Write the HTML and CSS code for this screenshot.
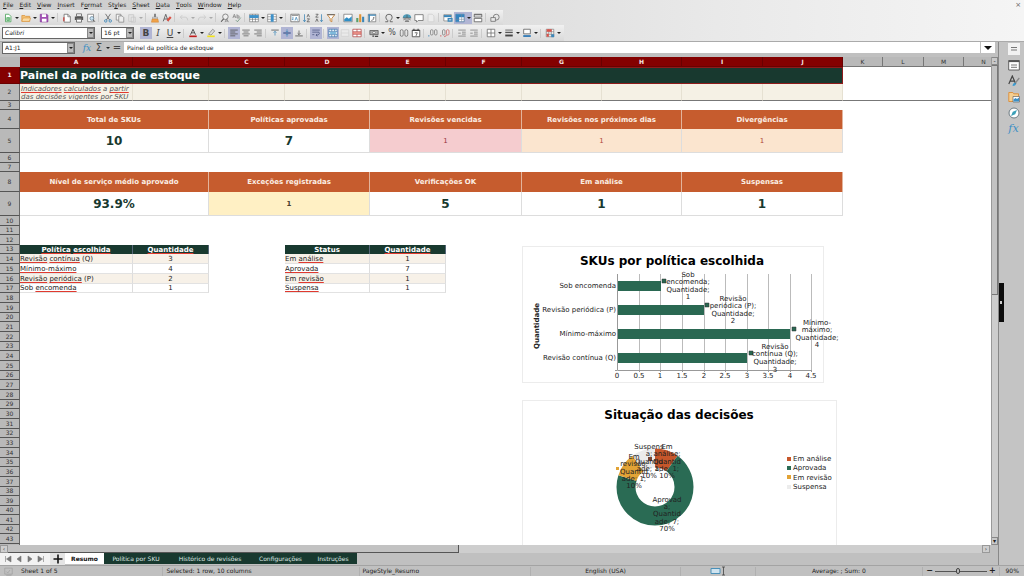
FILE: index.html
```
<!DOCTYPE html>
<html lang="pt">
<head>
<meta charset="utf-8">
<title>Painel da política de estoque</title>
<link rel="stylesheet" href="styles.css">
</head>
<body>
<svg class="defs" aria-hidden="true">
  <symbol id="new" viewBox="0 0 12 12"><path d="M3 1.500h4l2.500 2.500v6.500h-6.500z" fill="#fff" stroke="#4da45c"/><path d="M4.500 5.500h3.500v3.500h-3.500zM4.500 7.200h3.500M6.200 5.500v3.500" fill="none" stroke="#36a04a" stroke-width=".8"/></symbol>
  <symbol id="open" viewBox="0 0 12 12"><path d="M1 3h3.500l1 1h5v6h-9.500z" fill="#f3c276" stroke="#d88c31" stroke-width=".8"/><path d="M2.500 6h9l-1.500 4h-9z" fill="#fbdca4" stroke="#d88c31" stroke-width=".6"/></symbol>
  <symbol id="save" viewBox="0 0 12 12"><path d="M1.500 1.500h8l1.200 1.200v8h-9.200z" fill="#a34fb5" stroke="#84369a" stroke-width=".8"/><path d="M3.500 1.500h5v3.200h-5zM3.500 7h5.500v3.500h-5.500z" fill="#fff"/></symbol>
  <symbol id="pdf" viewBox="0 0 12 12"><path d="M2.500 1.500h4.500l3 3v6.500h-7.500z" fill="#fff" stroke="#666" stroke-width=".9"/><path d="M7 1.500v3h3" fill="none" stroke="#666" stroke-width=".8"/><path d="M2.200 5v5" stroke="#cf3b36" stroke-width="1.400"/></symbol>
  <symbol id="print" viewBox="0 0 12 12"><path d="M3 1h6v3h-6zM3 7.500h6v3.500h-6z" fill="#fff" stroke="#444" stroke-width=".8"/><path d="M1 4.200h10v4.300h-2v-1.500h-6v1.500h-2z" fill="#555"/></symbol>
  <symbol id="preview" viewBox="0 0 12 12"><path d="M2 1.500h7v9h-7z" fill="#fff" stroke="#666" stroke-width=".8"/><circle cx="7" cy="6.500" r="2.300" fill="#c8e2f2" stroke="#5e798c" stroke-width=".8"/><path d="M8.700 8.200l2 2.300" stroke="#444"/></symbol>
  <symbol id="cut" viewBox="0 0 12 12"><path d="M3 1l5 7.500M9 1l-5 7.500" stroke="#555" stroke-width=".9"/><circle cx="3.300" cy="9.500" r="1.500" fill="none" stroke="#3b86b8"/><circle cx="8.700" cy="9.500" r="1.500" fill="none" stroke="#3b86b8"/></symbol>
  <symbol id="copy" viewBox="0 0 12 12"><path d="M1.500 1.500h5.500v7h-5.500z" fill="#f5f5f5" stroke="#777" stroke-width=".8"/><path d="M4.500 3.500h4l2 2v5.500h-6z" fill="#eee" stroke="#777" stroke-width=".8"/></symbol>
  <symbol id="paste" viewBox="0 0 12 12"><path d="M2 2h6v8h-6zM5 5h5v6h-5z" fill="#e4e4e4" stroke="#c2c2c2" stroke-width=".8"/></symbol>
  <symbol id="brush" viewBox="0 0 12 12"><path d="M5.200 1h1.600v4h-1.600z" fill="#555"/><path d="M3 5h6v2h-6z" fill="#ddd" stroke="#777" stroke-width=".5"/><path d="M2.500 7.200h7l.8 3.800h-8.600z" fill="#efa24b" stroke="#d07a22" stroke-width=".5"/></symbol>
  <symbol id="clear" viewBox="0 0 12 12"><path d="M1.500 10l3-8.500 3 8.500M2.700 7.200h3.800" fill="none" stroke="#555"/><path d="M5.500 8.500l4-4.500 2 1.700-4 4.500z" fill="#db4f42"/></symbol>
  <symbol id="undo" viewBox="0 0 12 12"><path d="M4 2.500l-2.500 2.500 2.500 2.500M2 5h5.500q3 0 3 4" fill="none" stroke="#c9c9c9"/></symbol>
  <symbol id="redo" viewBox="0 0 12 12"><path d="M8 2.500l2.500 2.500-2.500 2.500M10 5h-5.500q-3 0-3 4" fill="none" stroke="#c9c9c9"/></symbol>
  <symbol id="find" viewBox="0 0 12 12"><circle cx="6.500" cy="4.500" r="3.300" fill="#eee" stroke="#777"/><path d="M4.300 7l-3 3.500" stroke="#555" stroke-width="1.300"/><path d="M6 11l2-4 2.200 4M6.700 9.700h2.800" fill="none" stroke="#777" stroke-width=".8"/></symbol>
  <symbol id="spell" viewBox="0 0 12 12"><path d="M1 6l1.800-4.500 1.800 4.500M1.700 4.500h2.300M6 1.500v4.500M6 3.500h2.500v2.500h-2.500" fill="none" stroke="#777" stroke-width=".8"/><path d="M4.500 8.500l2 2 4-5" fill="none" stroke="#668d76" stroke-width=".9"/></symbol>
  <symbol id="row" viewBox="0 0 12 12"><path d="M.8 1.500h10.400v9h-10.400zM.8 7.500h10.400M4.200 1.500v9M7.700 1.500v9" fill="#fff" stroke="#666" stroke-width=".7"/><path d="M.5 2.500h11v3.500h-11z" fill="#3e91c9"/></symbol>
  <symbol id="col" viewBox="0 0 12 12"><path d="M.8 1.500h10.400v9h-10.400zM.8 4.500h10.400M.8 7.500h10.400" fill="#fff" stroke="#666" stroke-width=".7"/><path d="M4.500 1.500h3.500v9h-3.500z" fill="#3e91c9"/></symbol>
  <symbol id="sort" viewBox="0 0 12 12"><path d="M1 1.500h10v9h-10z" fill="#fff" stroke="#555" stroke-width=".8"/><path d="M2 3h8" stroke="#888"/><path d="M3.500 4.500v4l-1.200-1.200M6 9l1.500-4 1.500 4" fill="none" stroke="#3a83b5" stroke-width=".9"/></symbol>
  <symbol id="asc" viewBox="0 0 12 12"><path d="M3 1.500v9l-1.500-2M3 10.500l1.500-2" fill="none" stroke="#3a83b5" stroke-width=".9"/><path d="M6 5l1.500-3.500 1.500 3.500M6 7h3l-3 3.500h3.300" fill="none" stroke="#555" stroke-width=".9"/></symbol>
  <symbol id="desc" viewBox="0 0 12 12"><path d="M9 1.500v9l-1.500-2M9 10.500l1.500-2" fill="none" stroke="#3a83b5" stroke-width=".9"/><path d="M2 1.500h3l-3 3.500h3.300M2 10.500l1.500-3.500 1.500 3.500" fill="none" stroke="#555" stroke-width=".9"/></symbol>
  <symbol id="filter" viewBox="0 0 12 12"><path d="M1.500 2h9l-3.500 4.500v4l-2-1v-3z" fill="#fff" stroke="#c77c2a"/><path d="M1.500 2h9" stroke="#666" stroke-width="1.200"/></symbol>
  <symbol id="image" viewBox="0 0 12 12"><path d="M1 1.500h10v9h-10z" fill="#fff" stroke="#666" stroke-width=".8"/><path d="M1.500 10v-2.500l3-2.500 2.500 2 3.500-3v6z" fill="#2f8fc6"/></symbol>
  <symbol id="chart" viewBox="0 0 12 12"><path d="M1.500 6h2.500v5h-2.500z" fill="#5a9e6a"/><path d="M5 1.500h2.500v9.500h-2.500z" fill="#e09334"/><path d="M8.500 4.500h2.500v6.500h-2.500z" fill="#3b86b8"/></symbol>
  <symbol id="pivot" viewBox="0 0 12 12"><path d="M1.500 1.500h9v9h-9z" fill="#fff" stroke="#666" stroke-width=".8"/><path d="M1.500 2.500h9M2.700 1.500v9" stroke="#3b86b8" stroke-width="1.600"/><path d="M5 9q3.500 0 3.500-4l-1.500 1.300" fill="none" stroke="#555" stroke-width=".8"/></symbol>
  <symbol id="omega" viewBox="0 0 12 12"><path d="M1.500 10.500h3v-1.500q-2.300-1.500-2.300-4 0-3.500 3.800-3.500t3.800 3.500q0 2.500-2.300 4v1.500h3" fill="none" stroke="#555"/></symbol>
  <symbol id="link" viewBox="0 0 12 12"><path d="M1 6a5 4.500 0 0 1 10 0z" fill="#4f9dbb"/><path d="M2 8.700a1.500 1.500 0 0 1 1.500-1.500h2M10 8.700a1.500 1.500 0 0 0-1.500-1.500h-2M3.500 10.200h5M4 8.700h4M1 6h10M6 2v4" fill="none" stroke="#555" stroke-width=".8"/></symbol>
  <symbol id="comment" viewBox="0 0 12 12"><path d="M1 2h10v7h-6l-2 2v-2h-2z" fill="#fff" stroke="#666" stroke-width=".9"/></symbol>
  <symbol id="header" viewBox="0 0 12 12"><path d="M2.500 1.500h5l2 2v7h-7z" fill="#ececec" stroke="#ccc" stroke-width=".8"/></symbol>
  <symbol id="define" viewBox="0 0 12 12"><path d="M1 2h9v7.500h-9z" fill="#fff" stroke="#666" stroke-width=".7"/><path d="M1 2.500h9v2.500h-9z" fill="#3b86b8"/><path d="M5.500 6h6v4.500h-6z" fill="#3b86b8"/><path d="M7 8.200h3" stroke="#fff"/></symbol>
  <symbol id="freeze" viewBox="0 0 12 12"><path d="M1 1.500h10v9h-10z" fill="#fff" stroke="#3b6e99" stroke-width=".8"/><path d="M1 1.500h10v3.500h-6v5.500h-4z" fill="#3484bf"/><path d="M1 7.500h10M8 1.500v9" stroke="#789" stroke-width=".7"/></symbol>
  <symbol id="split" viewBox="0 0 12 12"><path d="M1.500 1.500h9v3.300h-9zM1.500 6.500h9v4h-9z" fill="#fff" stroke="#555" stroke-width=".9"/><path d="M1.500 2.200h9" stroke="#555"/></symbol>
  <symbol id="draw" viewBox="0 0 12 12"><circle cx="7.500" cy="5" r="3.500" fill="none" stroke="#666" stroke-width=".9"/><path d="M1 5.500h5.500v4.500h-5.500z" fill="#e9e9e9" stroke="#666" stroke-width=".9"/></symbol>
  <symbol id="fontcolor" viewBox="0 0 12 12"><path d="M3 8l3-6.500 3 6.500M4.200 5.800h3.600" fill="none" stroke="#555" stroke-width="1.200"/><path d="M1.500 9h9v2h-9z" fill="#c01c1c"/></symbol>
  <symbol id="hilite" viewBox="0 0 12 12"><path d="M3 7.500l5-6 2.500 2-4.500 5z" fill="#ddd" stroke="#777" stroke-width=".8"/><path d="M1.500 9h9v2h-9z" fill="#f2e21c"/></symbol>
  <symbol id="left" viewBox="0 0 12 12"><path d="M1.500 2.500h9M1.500 4.800h6M1.500 7.100h9M1.500 9.400h6" stroke="#555"/></symbol>
  <symbol id="center" viewBox="0 0 12 12"><path d="M1.500 2.500h9M3 4.800h6M1.500 7.100h9M3 9.400h6" stroke="#666"/></symbol>
  <symbol id="right" viewBox="0 0 12 12"><path d="M1.500 2.500h9M4.500 4.800h6M1.500 7.100h9M4.500 9.400h6" stroke="#666"/></symbol>
  <symbol id="vtop" viewBox="0 0 12 12"><path d="M1.500 2.500h9" stroke="#555"/><path d="M6 9v-5M4.300 5.700l1.700-1.700 1.700 1.700" fill="none" stroke="#3b86b8" stroke-width=".9"/></symbol>
  <symbol id="vmid" viewBox="0 0 12 12"><path d="M1.500 6h9" stroke="#334f88" stroke-width="1.300"/><path d="M6 1.500v3M6 7.500v3M4.500 3.500l1.500 1.500 1.500-1.500M4.500 8.500l1.500-1.500 1.500 1.500" fill="none" stroke="#3b86b8" stroke-width=".8"/></symbol>
  <symbol id="vbot" viewBox="0 0 12 12"><path d="M1.500 9.500h9" stroke="#555"/><path d="M6 3v5M4.300 6.300l1.700 1.700 1.700-1.700" fill="none" stroke="#555" stroke-width=".9"/></symbol>
  <symbol id="wrap" viewBox="0 0 12 12"><path d="M1.500 2.500h9M1.500 5h8q1.500 2-1 3.500h-2.500M1.500 8h2.500M7.500 7l-1.500 1.500 1.500 1.500" fill="none" stroke="#4a5480" stroke-width=".9"/></symbol>
  <symbol id="merge" viewBox="0 0 12 12"><path d="M1 1.500h10v9h-10zM1 4h10M1 8h10M4.500 1.500v2.500M8 1.500v2.500M4.500 8v2.500M8 8v2.500" fill="#fff" stroke="#3b78ad" stroke-width=".9"/><path d="M2.500 6h7" stroke="#2f8fc6" stroke-width="1.500"/></symbol>
  <symbol id="msplit" viewBox="0 0 12 12"><path d="M1.500 2h9v8h-9zM1.500 6h9" fill="#eaeaea" stroke="#cfcfcf" stroke-width=".8"/></symbol>
  <symbol id="unmerge" viewBox="0 0 12 12"><path d="M1 1.500h10v9h-10zM1 4.500h10M1 7.500h10M6 1.500v3M6 7.500v3" fill="#fff" stroke="#b34444" stroke-width=".9"/><path d="M1 6h10" stroke="#e05a4e" stroke-width="1.500"/></symbol>
  <symbol id="money" viewBox="0 0 12 12"><path d="M1 3h10v5h-10z" fill="#aaa" stroke="#555" stroke-width=".9"/><circle cx="6" cy="5.500" r="1.500" fill="#fff" stroke="#444" stroke-width=".6"/><path d="M7 10h4M4 9.700h2" stroke="#444" stroke-width="1.300"/></symbol>
  <symbol id="num" viewBox="0 0 12 12"><rect x="1.500" y="2" width="3.500" height="8" rx="1.700" fill="none" stroke="#666" stroke-width=".9"/><rect x="7" y="2" width="3.500" height="8" rx="1.700" fill="none" stroke="#666" stroke-width=".9"/></symbol>
  <symbol id="date" viewBox="0 0 12 12"><path d="M1.500 2.500h9v8h-9z" fill="#fff" stroke="#444"/><path d="M1.500 3h9M3.500 1v2M8.500 1v2" stroke="#444" stroke-width="1.300"/><path d="M4.500 5.700h3l-1.500 3.800" fill="none" stroke="#444" stroke-width=".9"/></symbol>
  <symbol id="dec" viewBox="0 0 12 12"><rect x="3" y="2" width="3" height="6.500" rx="1.500" fill="none" stroke="#777" stroke-width=".9"/><rect x="7.800" y="2" width="3" height="6.500" rx="1.500" fill="none" stroke="#777" stroke-width=".9"/><path d="M1 8.500v1.800" stroke="#3b86b8"/></symbol>
  <symbol id="decr" viewBox="0 0 12 12"><rect x="3" y="2" width="3" height="6.500" rx="1.500" fill="none" stroke="#777" stroke-width=".9"/><rect x="7.800" y="2" width="3" height="6.500" rx="1.500" fill="none" stroke="#cc6464" stroke-width=".9"/><path d="M1 8.500v1.800M5 10.500l3-1.500" stroke="#cc4a4a" stroke-width=".9"/></symbol>
  <symbol id="indent" viewBox="0 0 12 12"><path d="M1.500 2.500h9M6 5h4.500M6 7.300h4.500M1.500 9.700h9M1.500 6.200h3" stroke="#777" stroke-width=".9"/></symbol>
  <symbol id="border" viewBox="0 0 12 12"><path d="M1.500 1.500h9v9h-9zM6 1.500v9M1.500 6h9" fill="#fff" stroke="#666" stroke-width=".9"/></symbol>
  <symbol id="line" viewBox="0 0 12 12"><path d="M1.500 2.500h9" stroke="#555"/><path d="M1.500 5.300h9" stroke="#555" stroke-width="1.600"/><path d="M1.500 9h9" stroke="#444" stroke-width="2.300"/></symbol>
  <symbol id="bcolor" viewBox="0 0 12 12"><path d="M2 1.500h8v5.500h-8z" fill="#fff" stroke="#555" stroke-width=".9"/><path d="M1.500 8.500h9v2.300h-9z" fill="#3a7fb8"/></symbol>
  <symbol id="cond" viewBox="0 0 12 12"><path d="M1.500 1.500h9v9h-9zM1.500 4.500h9M1.500 7.500h9M4.500 1.500v9M7.500 1.500v9" fill="#fff" stroke="#777" stroke-width=".8"/><path d="M2 1.500h6v3h-6zM2 7h2.500v3.500h-2.500z" fill="#dc5148"/><path d="M7.500 7.500h3.500v3.500h-3.500z" fill="#3b86b8"/></symbol>
  <symbol id="menu" viewBox="0 0 12 12"><path d="M0 0h12v12h-12z" fill="#f2f2f2"/><path d="M3 4.500h6M3 7h6" stroke="#777"/></symbol>
  <symbol id="props" viewBox="0 0 12 12"><path d="M.7 1.500h10.600v9.500h-10.600z" fill="#fff" stroke="#555" stroke-width=".9"/><path d="M.7 2.300h10.600" stroke="#555" stroke-width="1.600"/><path d="M3 6h6M3 8.300h6" stroke="#666" stroke-width=".9"/></symbol>
  <symbol id="styles" viewBox="0 0 12 12"><path d="M.8 9l3.500-8 3.500 8M2.200 6.200h4.200" fill="none" stroke="#444" stroke-width="1.200"/><path d="M11.300 3l-4 5" stroke="#888" stroke-width="1.300"/><path d="M4.500 11q.5-3.500 3-3.300 1.500 2.800-3 3.300z" fill="#3b9bd0"/></symbol>
  <symbol id="gallery" viewBox="0 0 12 12"><path d="M.8 1.500h4l1 1.300h4.700v7.700h-9.700z" fill="#f5cf92" stroke="#dc8c34" stroke-width=".9"/><path d="M5 5.500h6.500v5.500h-6.500z" fill="#fff" stroke="#666" stroke-width=".7"/><path d="M5.500 10.500v-2l2-1.500 1.500 1 2-1.500v4z" fill="#3b8fc6"/></symbol>
  <symbol id="compass" viewBox="0 0 12 12"><circle cx="6" cy="6" r="5" fill="#fff" stroke="#6d7b83"/><path d="M9 3l-1.800 4.200-4.200 1.800 1.800-4.200z" fill="#3ba0b8"/></symbol>
  <symbol id="tick" viewBox="0 0 12 12"><path d="M1 1.500h10v8h-10zM3 6l2 2 3-4M3 11h7" fill="none" stroke="#999" stroke-width=".8"/></symbol>
</svg>

<header class="chrome">
  <nav class="menubar">
    <button><u>F</u>ile</button><button><u>E</u>dit</button><button><u>V</u>iew</button><button><u>I</u>nsert</button><button>F<u>o</u>rmat</button><button>St<u>y</u>les</button><button><u>S</u>heet</button><button><u>D</u>ata</button><button><u>T</u>ools</button><button><u>W</u>indow</button><button><u>H</u>elp</button>
    <button class="close" aria-label="Close">×</button>
  </nav>
  <div class="toolbar">
    <button aria-label="New"><svg><use href="#new"/></svg></button><i class="dd"></i>
    <button aria-label="Open"><svg><use href="#open"/></svg></button><i class="dd"></i>
    <button aria-label="Save"><svg><use href="#save"/></svg></button><i class="dd"></i><i class="sep"></i>
    <button aria-label="Export"><svg><use href="#pdf"/></svg></button>
    <button aria-label="Print"><svg><use href="#print"/></svg></button>
    <button aria-label="Preview"><svg><use href="#preview"/></svg></button><i class="sep"></i>
    <button aria-label="Cut"><svg><use href="#cut"/></svg></button>
    <button aria-label="Copy"><svg><use href="#copy"/></svg></button>
    <button aria-label="Paste"><svg><use href="#paste"/></svg></button><i class="dd dim"></i><i class="sep"></i>
    <button aria-label="Clone"><svg><use href="#brush"/></svg></button>
    <button aria-label="Clear"><svg><use href="#clear"/></svg></button><i class="sep"></i>
    <button aria-label="Undo"><svg><use href="#undo"/></svg></button><i class="dd dim"></i>
    <button aria-label="Redo"><svg><use href="#redo"/></svg></button><i class="dd dim"></i><i class="sep"></i>
    <button aria-label="Find"><svg><use href="#find"/></svg></button>
    <button aria-label="Spelling"><svg><use href="#spell"/></svg></button><i class="sep"></i>
    <button aria-label="Row"><svg><use href="#row"/></svg></button><i class="dd"></i>
    <button aria-label="Column"><svg><use href="#col"/></svg></button><i class="dd"></i><i class="sep"></i>
    <button aria-label="Sort"><svg><use href="#sort"/></svg></button>
    <button aria-label="Ascending"><svg><use href="#asc"/></svg></button>
    <button aria-label="Descending"><svg><use href="#desc"/></svg></button>
    <button aria-label="Filter"><svg><use href="#filter"/></svg></button><i class="sep"></i>
    <button aria-label="Image"><svg><use href="#image"/></svg></button>
    <button aria-label="Chart"><svg><use href="#chart"/></svg></button>
    <button aria-label="Pivot"><svg><use href="#pivot"/></svg></button><i class="sep"></i>
    <button aria-label="Symbol"><svg><use href="#omega"/></svg></button><i class="dd"></i>
    <button aria-label="Link"><svg><use href="#link"/></svg></button>
    <button aria-label="Comment"><svg><use href="#comment"/></svg></button>
    <button aria-label="Headers"><svg><use href="#header"/></svg></button><i class="sep"></i>
    <button aria-label="Print area"><svg><use href="#define"/></svg></button>
    <button class="on" aria-label="Freeze"><svg><use href="#freeze"/></svg></button><i class="dd on"></i>
    <button aria-label="Split"><svg><use href="#split"/></svg></button><i class="sep"></i>
    <button aria-label="Draw"><svg><use href="#draw"/></svg></button>
  </div>
  <div class="toolbar format">
    <div class="combo font"><input aria-label="Font name" value="Calibri"><button aria-label="Fonts"><i class="dd"></i></button></div>
    <div class="combo size"><input aria-label="Font size" value="16 pt"><button aria-label="Sizes"><i class="dd"></i></button></div>
    <button class="on letter bold">B</button><button class="letter ital">I</button><button class="letter under">U</button><i class="dd"></i><i class="sep"></i>
    <button aria-label="Font color"><svg><use href="#fontcolor"/></svg></button><i class="dd"></i>
    <button aria-label="Highlight"><svg><use href="#hilite"/></svg></button><i class="dd"></i><i class="sep"></i>
    <button class="on" aria-label="Left"><svg><use href="#left"/></svg></button>
    <button aria-label="Center"><svg><use href="#center"/></svg></button>
    <button aria-label="Right"><svg><use href="#right"/></svg></button><i class="sep"></i>
    <button aria-label="Top"><svg><use href="#vtop"/></svg></button>
    <button class="on" aria-label="Middle"><svg><use href="#vmid"/></svg></button>
    <button aria-label="Bottom"><svg><use href="#vbot"/></svg></button><i class="sep"></i>
    <button class="on" aria-label="Wrap"><svg><use href="#wrap"/></svg></button><i class="sep"></i>
    <button class="on" aria-label="Merge"><svg><use href="#merge"/></svg></button>
    <button aria-label="Merge cells"><svg><use href="#msplit"/></svg></button>
    <button aria-label="Unmerge"><svg><use href="#unmerge"/></svg></button><i class="sep"></i>
    <button aria-label="Currency"><svg><use href="#money"/></svg></button><i class="dd"></i>
    <button class="letter pct">%</button>
    <button aria-label="Number"><svg><use href="#num"/></svg></button>
    <button aria-label="Date"><svg><use href="#date"/></svg></button><i class="sep"></i>
    <button aria-label="Add decimal"><svg><use href="#dec"/></svg></button>
    <button aria-label="Delete decimal"><svg><use href="#decr"/></svg></button><i class="sep"></i>
    <button aria-label="Indent"><svg><use href="#indent"/></svg></button>
    <button aria-label="Outdent"><svg><use href="#indent"/></svg></button><i class="sep"></i>
    <button aria-label="Borders"><svg><use href="#border"/></svg></button><i class="dd"></i>
    <button aria-label="Line style"><svg><use href="#line"/></svg></button><i class="dd"></i>
    <button aria-label="Border color"><svg><use href="#bcolor"/></svg></button><i class="dd"></i><i class="sep"></i>
    <button aria-label="Conditional"><svg><use href="#cond"/></svg></button><i class="dd"></i>
  </div>
</header>

<div class="work">
  <main class="main">
    <div class="formula">
      <div class="combo name"><input aria-label="Name box" value="A1:J1"><button aria-label="Names"><i class="dd"></i></button></div>
      <button class="fx">fx</button><button class="sum">Σ</button><i class="dd"></i><button class="sum">=</button>
      <input class="entry" aria-label="Formula" value="Painel da política de estoque">
      <button class="expand" aria-label="Expand"></button>
    </div>
    <div class="view">
      <div class="sheet">
        <table class="grid">
          <colgroup><col class="w20"><col class="w113"><col class="w76"><col class="w76"><col class="w85"><col class="w76"><col class="w76"><col class="w80"><col class="w80"><col class="w81"><col class="w80"><col class="w40"><col class="w41"><col class="w40"><col class="w40"></colgroup>
          <thead><tr><th></th><th class="sel">A</th><th class="sel">B</th><th class="sel">C</th><th class="sel">D</th><th class="sel">E</th><th class="sel">F</th><th class="sel">G</th><th class="sel">H</th><th class="sel">I</th><th class="sel">J</th><th>K</th><th>L</th><th>M</th><th>N</th></tr></thead>
          <tbody>
            <tr class="r-title"><th class="sel">1</th><td colspan="10" class="title">Painel da política de estoque</td><td colspan="4"></td></tr>
            <tr class="r-sub"><th>2</th><td class="sub"><div><span class="sp">Indicadores</span> <span class="sp">calculados</span> a <span class="sp">partir</span> <span class="sp">das</span> <span class="sp">decisões</span> <span class="sp">vigentes</span> <span class="sp">por</span> <span class="sp">SKU</span></div></td><td class="cream"></td><td class="cream"></td><td class="cream"></td><td class="cream"></td><td class="cream"></td><td class="cream"></td><td class="cream"></td><td class="cream"></td><td class="cream"></td><td colspan="4"></td></tr>
            <tr class="short"><th>3</th><td colspan="14"></td></tr>
            <tr class="r-head"><th>4</th><td colspan="2">Total de SKUs</td><td colspan="2">Políticas aprovadas</td><td colspan="2">Revisões vencidas</td><td colspan="2">Revisões nos próximos dias</td><td colspan="2">Divergências</td><td colspan="4" class="blank"></td></tr>
            <tr class="r-value"><th>5</th><td colspan="2">10</td><td colspan="2">7</td><td colspan="2" class="pink">1</td><td colspan="2" class="peach">1</td><td colspan="2" class="peach">1</td><td colspan="4" class="blank"></td></tr>
            <tr><th>6</th><td colspan="14"></td></tr>
            <tr class="short"><th>7</th><td colspan="14"></td></tr>
            <tr class="r-head r-tall"><th>8</th><td colspan="2">Nível de serviço médio aprovado</td><td colspan="2">Exceções registradas</td><td colspan="2">Verificações OK</td><td colspan="2">Em análise</td><td colspan="2">Suspensas</td><td colspan="4" class="blank"></td></tr>
            <tr class="r-value"><th>9</th><td colspan="2">93.9%</td><td colspan="2" class="yellow">1</td><td colspan="2">5</td><td colspan="2">1</td><td colspan="2">1</td><td colspan="4" class="blank"></td></tr>
            <tr><th>10</th><td colspan="14"></td></tr>
            <tr class="short"><th>11</th><td colspan="14"></td></tr>
            <tr><th>12</th><td colspan="14"></td></tr>
            <tr class="short"><th>13</th><td class="th"><span class="sp">Política</span> <span class="sp">escolhida</span></td><td class="th"><span class="sp">Quantidade</span></td><td></td><td class="th">Status</td><td class="th"><span class="sp">Quantidade</span></td><td colspan="9"></td></tr>
            <tr><th>14</th><td class="c odd"><span class="sp">Revisão</span> <span class="sp">contínua</span> (Q)</td><td class="c n odd">3</td><td></td><td class="c odd">Em <span class="sp">análise</span></td><td class="c n odd">1</td><td colspan="9"></td></tr>
            <tr><th>15</th><td class="c"><span class="sp">Mínimo-máximo</span></td><td class="c n">4</td><td></td><td class="c"><span class="sp">Aprovada</span></td><td class="c n">7</td><td colspan="9"></td></tr>
            <tr><th>16</th><td class="c odd"><span class="sp">Revisão</span> <span class="sp">periódica</span> (P)</td><td class="c n odd">2</td><td></td><td class="c odd">Em <span class="sp">revisão</span></td><td class="c n odd">1</td><td colspan="9"></td></tr>
            <tr class="short"><th>17</th><td class="c">Sob <span class="sp">encomenda</span></td><td class="c n">1</td><td></td><td class="c"><span class="sp">Suspensa</span></td><td class="c n">1</td><td colspan="9"></td></tr>
            <tr><th>18</th><td colspan="14"></td></tr>
            <tr><th>19</th><td colspan="14"></td></tr>
            <tr class="short"><th>20</th><td colspan="14"></td></tr>
            <tr><th>21</th><td colspan="14"></td></tr>
            <tr><th>22</th><td colspan="14"></td></tr>
            <tr class="short"><th>23</th><td colspan="14"></td></tr>
            <tr><th>24</th><td colspan="14"></td></tr>
            <tr><th>25</th><td colspan="14"></td></tr>
            <tr class="short"><th>26</th><td colspan="14"></td></tr>
            <tr><th>27</th><td colspan="14"></td></tr>
            <tr><th>28</th><td colspan="14"></td></tr>
            <tr class="short"><th>29</th><td colspan="14"></td></tr>
            <tr><th>30</th><td colspan="14"></td></tr>
            <tr><th>31</th><td colspan="14"></td></tr>
            <tr class="short"><th>32</th><td colspan="14"></td></tr>
            <tr><th>33</th><td colspan="14"></td></tr>
            <tr><th>34</th><td colspan="14"></td></tr>
            <tr class="short"><th>35</th><td colspan="14"></td></tr>
            <tr><th>36</th><td colspan="14"></td></tr>
            <tr><th>37</th><td colspan="14"></td></tr>
            <tr class="short"><th>38</th><td colspan="14"></td></tr>
            <tr><th>39</th><td colspan="14"></td></tr>
            <tr class="short"><th>40</th><td colspan="14"></td></tr>
            <tr><th>41</th><td colspan="14"></td></tr>
            <tr class="short"><th>42</th><td colspan="14"></td></tr>
            <tr><th>43</th><td colspan="14"></td></tr>
            <tr><th></th><td colspan="14"></td></tr>
          </tbody>
        </table>

        <svg class="chart bars" viewBox="0 0 302 137">
          <rect class="frame" x=".5" y=".5" width="301" height="136"/>
          <text class="ct" x="150" y="19">SKUs por política escolhida</text>
          <path class="gl" d="M117.500 28v96M138.500 28v96M160.500 28v96M182.500 28v96M203.500 28v96M225.500 28v96M246.500 28v96M268.500 28v96M289.500 28v96"/>
          <path class="ax" d="M95.500 28v96.500h194M117.500 124v2M138.500 124v2M160.500 124v2M182.500 124v2M203.500 124v2M225.500 124v2M246.500 124v2M268.500 124v2M289.500 124v2M93 124.500h2"/>
          <g fill="#2a6852"><path d="M96 35h43v10h-43zM96 59h86v10h-86zM96 83h172v10h-172zM96 107h129v10h-129z"/>
          <path d="M140 33h4v4h-4zM183 57h4v4h-4zM270 81h4v4h-4zM227 105h4v4h-4z" stroke="#333" stroke-width=".5"/></g>
          <g class="end"><text x="94" y="42">Sob encomenda</text><text x="94" y="66">Revisão periódica (P)</text><text x="94" y="90">Mínimo-máximo</text><text x="94" y="114">Revisão contínua (Q)</text></g>
          <g class="mid"><text x="95" y="132">0</text><text x="117" y="132">0.5</text><text x="138" y="132">1</text><text x="160" y="132">1.5</text><text x="182" y="132">2</text><text x="203" y="132">2.5</text><text x="225" y="132">3</text><text x="246" y="132">3.5</text><text x="268" y="132">4</text><text x="289" y="132">4.5</text>
          <text x="166" y="31">Sob</text><text x="166" y="38">encomenda;</text><text x="166" y="46">Quantidade;</text><text x="166" y="53">1</text>
          <text x="211" y="55">Revisão</text><text x="211" y="62">periódica (P);</text><text x="211" y="70">Quantidade;</text><text x="211" y="77">2</text>
          <text x="295" y="79">Mínimo-</text><text x="295" y="86">máximo;</text><text x="295" y="94">Quantidade;</text><text x="295" y="101">4</text>
          <text x="253" y="103">Revisão</text><text x="253" y="110">contínua (Q);</text><text x="253" y="118">Quantidade;</text><text x="253" y="126">3</text></g>
          <text class="yl" transform="translate(17 80) rotate(-90)">Quantidade</text>
        </svg>

        <svg class="chart donut" viewBox="0 0 315 160">
          <rect class="frame" x=".5" y=".5" width="314" height="159"/>
          <text class="ct" x="157" y="19">Situação das decisões</text>
          <g fill="none" stroke-width="19" transform="rotate(-90 133 87)">
            <circle cx="133" cy="87" r="29" pathLength="10" stroke="#c7572b" stroke-dasharray="1 9"/>
            <circle cx="133" cy="87" r="29" pathLength="10" stroke="#2a6b54" stroke-dasharray="7 3" stroke-dashoffset="-1"/>
            <circle cx="133" cy="87" r="29" pathLength="10" stroke="#e2a336" stroke-dasharray="1 9" stroke-dashoffset="-8"/>
            <circle cx="133" cy="87" r="29" pathLength="10" stroke="#ececec" stroke-dasharray="1 9" stroke-dashoffset="-9"/>
          </g>
          <path d="M94 67h3v3h-3z" fill="#e2a336"/><path d="M126 57h4v4h-4z" fill="#774433"/>
          <g class="mid"><text x="127" y="49">Suspens</text><text x="127" y="56">a;</text><text x="127" y="64">Quantid</text><text x="127" y="71">ade; 1;</text><text x="127" y="78">10%</text>
          <text x="145" y="49">Em</text><text x="145" y="56">análise;</text><text x="145" y="64">Quantid</text><text x="145" y="71">ade; 1;</text><text x="145" y="78">10%</text>
          <text x="112" y="59">Em</text><text x="112" y="66">revisão;</text><text x="112" y="74">Quantid</text><text x="112" y="81">ade; 1;</text><text x="112" y="88">10%</text>
          <text x="145" y="102">Aprovad</text><text x="145" y="109">a;</text><text x="145" y="116">Quantid</text><text x="145" y="124">ade; 7;</text><text x="145" y="131">70%</text></g>
          <path d="M265 57h4v4h-4z" fill="#c7572b"/><path d="M265 66h4v4h-4z" fill="#2a6b54"/><path d="M265 75h4v4h-4z" fill="#e2a336"/><path d="M265 85h4v4h-4z" fill="#ececec"/>
          <text x="271" y="61">Em análise</text><text x="271" y="70">Aprovada</text><text x="271" y="80">Em revisão</text><text x="271" y="89">Suspensa</text>
        </svg>
      </div>
      <div class="vscroll"><button aria-label="Up">-</button><span class="vthumb"></span><button aria-label="Down">▾</button></div>
    </div>
    <div class="hscroll"><button aria-label="Scroll left">‹</button><span class="hthumb"></span><span class="htrack"></span><button aria-label="Scroll right">›</button></div>
    <div class="tabs">
      <div class="nav">
        <button aria-label="First"><svg viewBox="0 0 8 8"><path d="M1.500 1v6M7 1l-4.500 3 4.500 3z"/></svg></button>
        <button aria-label="Previous"><svg viewBox="0 0 8 8"><path d="M6 1l-4 3 4 3z"/></svg></button>
        <button aria-label="Next"><svg viewBox="0 0 8 8"><path d="M2 1l4 3-4 3z"/></svg></button>
        <button aria-label="Last"><svg viewBox="0 0 8 8"><path d="M6.500 1v6M1 1l4.500 3-4.500 3z"/></svg></button>
      </div>
      <button class="add" aria-label="Add sheet"><svg viewBox="0 0 10 10"><path d="M5 0.500v9M.5 5h9" stroke="#111" stroke-width="1.600"/></svg></button>
      <button class="tab active">Resumo</button><button class="tab t2">Política por SKU</button><button class="tab t3">Histórico de revisões</button><button class="tab t4">Configurações</button><button class="tab t5">Instruções</button>
    </div>
  </main>
  <aside class="side">
    <button aria-label="Settings"><svg><use href="#menu"/></svg></button>
    <button aria-label="Properties"><svg><use href="#props"/></svg></button>
    <button aria-label="Styles"><svg><use href="#styles"/></svg></button>
    <button aria-label="Gallery"><svg><use href="#gallery"/></svg></button>
    <button aria-label="Navigator"><svg><use href="#compass"/></svg></button>
    <button class="fx big">fx</button>
    <span class="grip"></span>
  </aside>
</div>

<footer class="status">
  <span class="s1"><svg><use href="#tick"/></svg>Sheet 1 of 5</span>
  <span class="s2">Selected: 1 row, 10 columns</span>
  <span class="s3">PageStyle_Resumo</span>
  <span class="s4">English (USA)</span>
  <span class="s5"><svg viewBox="0 0 16 10"><path d="M1 2.500h9v5h-9z" fill="#cfe3ef" stroke="#4a90b8"/><path d="M12 1h3M13.500 1v8M12 9h3" stroke="#444" stroke-width=".8"/></svg></span>
  <span class="s6">Average: ; Sum: 0</span>
  <span class="s7"><b>−</b><input type="range" aria-label="Zoom" min="0" max="100" value="44"><b>+</b></span>
  <span class="s8">90%</span>
</footer>
</body>
</html>
```
FILE: styles.css
```
* { box-sizing: border-box; }
body {
  margin: 0;
  height: 100vh;
  display: flex;
  flex-direction: column;
  overflow: hidden;
  background: #c0c0c0;
  color: #222;
  font: 6px/8px "DejaVu Sans", sans-serif;
}
button, input { font: inherit; color: inherit; border: 0; padding: 0; margin: 0; background: none; border-radius: 0; min-width: 0; }
button { display: flex; align-items: center; justify-content: center; flex: none; }
.defs { display: none; }

.chrome {
  flex: none;
  background: linear-gradient(90deg, #cbcbcb, #dcdcdc 45%, #e9e9e9 70%, #f5f5f5);
  border-bottom: 1px solid #aaa;
}
.menubar { display: flex; height: 10px; gap: 6px; padding: 0 3px; }
.menubar .close { margin-left: auto; font-size: 7px; color: #666; }
.toolbar {
  display: flex;
  align-items: center;
  width: max-content;
  height: 15px;
  padding: 0 2px;
  background: linear-gradient(#f1f1f1, #d9d9d9);
}
.toolbar.format { height: 16px; }
.toolbar > button { width: 12px; height: 12px; }
.toolbar svg { width: 10px; height: 10px; }
.toolbar .on { background: #b1b5d4; }
.sep { width: 4px; height: 9px; flex: none; border-left: 1px solid #ccc; margin-left: 1px; }
.dd { width: 6px; flex: none; display: flex; justify-content: center; }
.dd::before { content: ""; border: 2px solid transparent; border-top-color: #222; border-bottom: 0; }
.dd.dim::before { border-top-color: #aaa; }
.dd.on { height: 12px; align-items: center; }
.letter { font-size: 9px; line-height: 12px; color: #444; }
.bold { font-weight: bold; }
.ital { font-family: "DejaVu Serif", serif; font-style: italic; }
.under { text-decoration: underline; }
.pct { font-size: 8px; }

.combo { display: flex; height: 12px; background: #fff; border: 1px solid #666; flex: none; }
.combo input { flex: 1; padding: 0 2px; }
.combo button { width: 7px; background: #bbb; border: 1px solid #888; }
.combo.font { width: 93px; margin-right: 6px; font-style: italic; }
.combo.size { width: 33px; margin-right: 6px; }
.combo.name { width: 73px; margin-right: 6px; }

.work { flex: 1; display: flex; min-height: 0; }
.main { flex: 1; min-width: 0; display: flex; flex-direction: column; }
.formula { flex: none; display: flex; align-items: center; height: 15px; padding: 0 3px 4px 2px; }
.fx { width: 12px; color: #3a8fc4; font: italic 9px/10px "DejaVu Serif", serif; }
.fx.big { font-size: 11px; }
.sum { width: 12px; font-size: 10px; line-height: 10px; color: #444; }
.entry { flex: 1; height: 11px; margin: 0 1px; padding: 0 3px; background: #fff; }
.expand { width: 14px; height: 11px; background: #fff; }
.expand::before { content: ""; border: 4px solid transparent; border-top-color: #111; border-bottom: 0; }

.view { flex: 1; display: flex; min-height: 0; }
.sheet { flex: 1; min-width: 0; position: relative; overflow: hidden; background: #fff; }
.grid { table-layout: fixed; width: 1004px; border-collapse: separate; border-spacing: 0; font-size: 7px; line-height: 8px; }
.w20 { width: 20px; } .w113 { width: 113px; } .w76 { width: 76px; } .w85 { width: 85px; }
.w80 { width: 80px; } .w81 { width: 81px; } .w40 { width: 40px; } .w41 { width: 41px; }
.grid tr { height: 10px; }
.grid tr.short { height: 9px; }
.grid th, .grid td { padding: 0; white-space: nowrap; overflow: hidden; }
.grid th { background: #b9b9b9; color: #333; font-size: 6px; line-height: 6px; font-weight: normal; }
.grid tbody th { border-right: 1px solid #666; border-bottom: 1px solid #555; }
.grid thead th { border-right: 1px solid #777; border-bottom: 1px solid #777; }
.grid thead th:first-child { border: 0; }
.grid th.sel { background: #840000; color: #f4e4e4; font-weight: bold; border-color: #6a0000; }
.grid .r-title { height: 17px; }
.grid .title { background: #18392f; border: 1px solid #8e1b1b; border-left: 0; color: #fff; font-size: 11px; line-height: 13px; font-weight: bold; }
.grid .r-sub { height: 17px; }
.grid .r-sub td { border-bottom: 1px solid #777; background: #fff; }
.grid .r-sub .sub, .grid .r-sub .cream { background: #f5f1e5; border-right: 1px solid #e6e1d2; }
.sub div { white-space: normal; font-style: italic; color: #555; line-height: 8px; height: 15px; padding-left: 1px; overflow: hidden; }
.grid .r-head { height: 19px; }
.grid .r-tall { height: 20px; }
.r-head td { background: #c65c2e; color: #fbeee4; font-weight: bold; text-align: center; border-right: 1px solid #e3b49c; }
.grid .r-value { height: 24px; }
.r-value td { text-align: center; font-weight: bold; font-size: 12px; line-height: 14px; color: #18392f; border-right: 1px solid #ddd; border-bottom: 1px solid #ddd; }
.r-value td.pink { background: #f5cccf; color: #963640; font-size: 7px; font-weight: normal; }
.r-value td.peach { background: #fbe5cf; color: #b0473a; font-size: 7px; font-weight: normal; }
.r-value td.yellow { background: #fff0c4; color: #4a4030; font-size: 7px; }
.grid td.blank { background: none; border: 0; }
.grid .th { background: #18392f; color: #fff; font-weight: bold; text-align: center; border-right: 1px solid #567; }
.grid .c { border-right: 1px solid #ddd; border-bottom: 1px solid #e2e2e2; color: #222; }
.grid .odd { background: #f7f1e8; }
.grid .n { text-align: center; }
.sp { text-decoration: underline 1px #e0392f; text-underline-offset: 1px; text-decoration-skip-ink: none; }

.chart { position: absolute; overflow: visible; font-size: 7px; fill: #222; }
.bars { left: 522px; top: 189px; width: 302px; height: 137px; }
.donut { left: 522px; top: 343px; width: 315px; height: 160px; }
.frame { fill: #fff; stroke: #ececec; }
.ct { font-size: 12px; font-weight: bold; text-anchor: middle; fill: #000; }
.gl { stroke: #bbb; fill: none; }
.ax { stroke: #999; fill: none; }
.end { text-anchor: end; }
.mid, .yl { text-anchor: middle; }
.yl { font-weight: bold; }

.vscroll { width: 7px; flex: none; display: flex; flex-direction: column; background: #cdcdcd; border-left: 1px solid #999; }
.vscroll button { height: 8px; background: #c8c8c8; border: 1px solid #888; border-left: 0; }
.vthumb { height: 230px; background: #c2c2c2; border: 1px solid #777; border-left: 0; }
.vscroll button:last-child { margin-top: auto; }
.hscroll { flex: none; display: flex; height: 8px; background: #cecece; margin-right: 8px; }
.hscroll button { width: 8px; border: 1px solid #999; }
.hthumb { flex: 450; background: #c2c2c2; border-right: 1px solid #555; border-bottom: 1px solid #555; }
.htrack { flex: 523; }

.tabs { flex: none; display: flex; height: 12px; font-size: 6px; color: #dfe8e4; }
.nav { display: flex; gap: 3px; padding: 0 4px; width: 50px; background: #f2f2f2; }
.nav button { width: 8px; }
.nav svg { width: 8px; height: 8px; fill: #777; stroke: #777; stroke-width: .6; }
.add { width: 15px; background: #e4e4e4; }
.add svg { width: 10px; height: 10px; }
.tab { background: #18392f; height: 11px; }
.tab.active { background: #fff; color: #111; font-weight: bold; width: 39px; }
.t2 { width: 64px; } .t3 { width: 84px; } .t4 { width: 57px; } .t5 { width: 48px; }

.side { width: 26px; flex: none; position: relative; display: flex; flex-direction: column; align-items: center; gap: 4px; padding: 1px 0 0 4px; border-left: 1px solid #888; background: #c4c4c4; }
.side button { height: 12px; width: 14px; }
.side svg { width: 12px; height: 12px; }
.grip { position: absolute; left: 0; top: 241px; width: 5px; height: 39px; background: #0c0c0c; }
.grip::before { content: ""; position: absolute; left: 1px; top: 18px; width: 2px; height: 3px; background: #ccc; }

.status { flex: none; display: flex; align-items: center; height: 11px; border-top: 1px solid #a3a3a3; }
.status span { display: flex; align-items: center; height: 9px; border-right: 1px solid #b0b0b0; }
.s1 { flex: 161; padding-left: 4px; gap: 8px; }
.s1 svg { width: 9px; height: 9px; }
.s2 { flex: 196; padding-left: 3px; }
.s3 { flex: 170; padding-left: 2px; }
.s4 { flex: 152; justify-content: center; }
.s5 { flex: 75; justify-content: center; }
.s5 svg { width: 16px; height: 10px; }
.s6 { flex: 168; justify-content: center; }
.s7 { flex: 78; gap: 2px; justify-content: center; }
.status .s8 { flex: 24; justify-content: center; border: 0; }
.s7 b { font-size: 8px; }
.s7 input { appearance: none; width: 52px; height: 7px; background: linear-gradient(#555, #555) center / 100% 1px no-repeat; }
.s7 input::-webkit-slider-thumb { appearance: none; width: 4px; height: 6px; background: #bbb; border: 1px solid #444; border-radius: 2px; }
```
